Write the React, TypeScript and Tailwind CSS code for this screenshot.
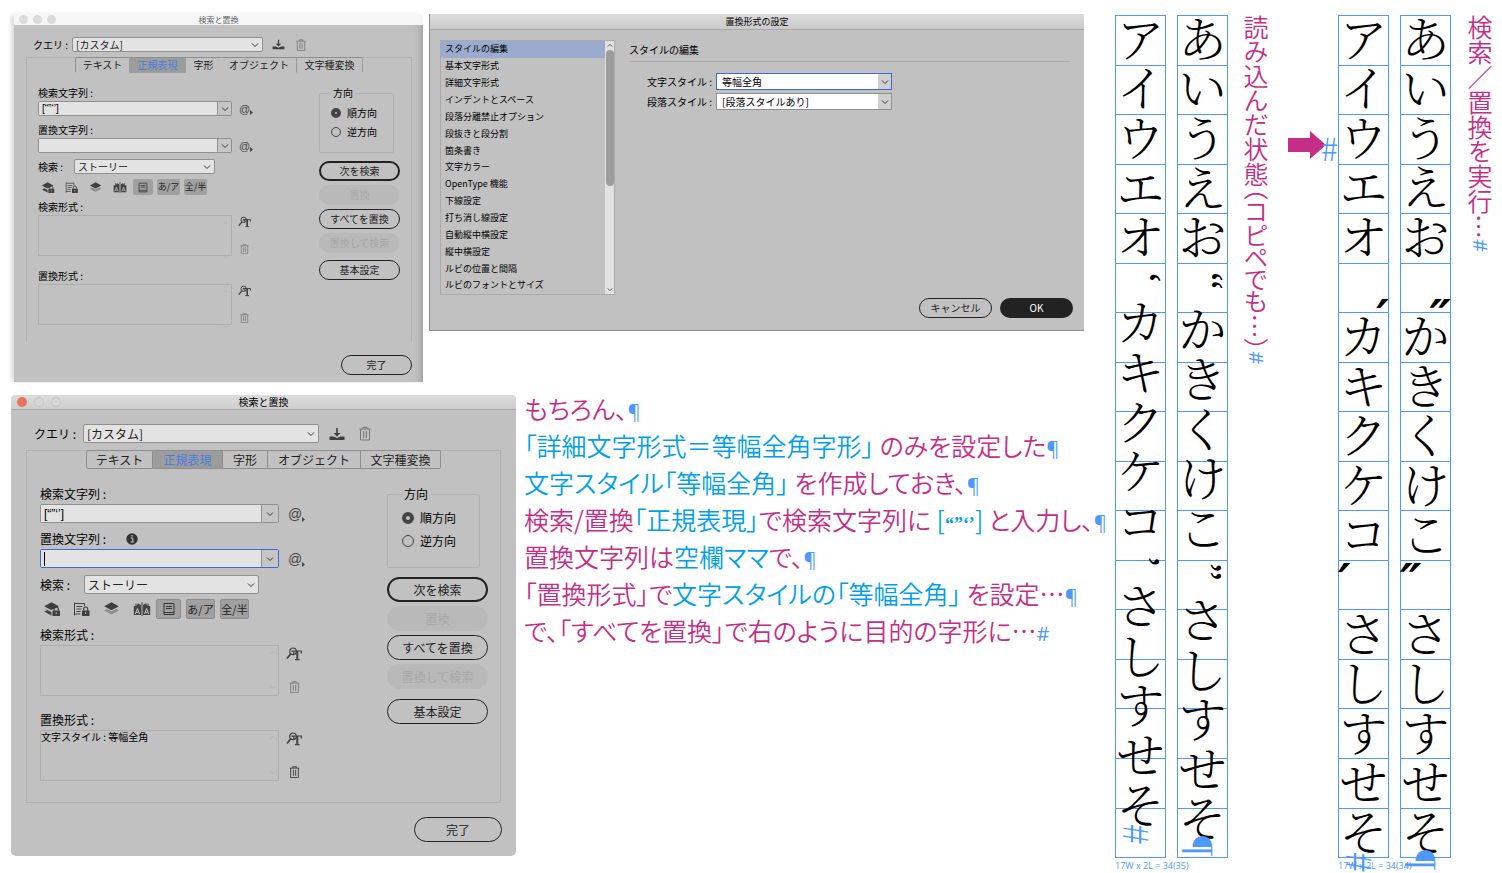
import React from "react";
import { clsx } from "clsx";

type Size = "sm" | "lg";

const SANS = "font-['Noto_Sans_CJK_JP',sans-serif]";
const MINCHO = "font-['Noto_Serif_CJK_JP','Noto_Sans_CJK_JP',serif]";

/* ---------- icons ---------- */

function Chevron({ className }: { className?: string }) {
  return (
    <svg viewBox="0 0 8 8" className={className} fill="none" stroke="#333" strokeWidth="1" aria-hidden="true">
      <path d="M1 2.500 4 5.500 7 2.500" />
    </svg>
  );
}

function SaveIcon({ className }: { className?: string }) {
  return (
    <svg viewBox="0 0 16 14" className={className} fill="#3f3f3f" aria-hidden="true">
      <path d="M7.200 1h1.600v5h2.700L8 9.600 4.500 6h2.700z" />
      <path d="M.5 9.500h4.200L8 11l3.300-1.500h4.200V13H.5z" />
    </svg>
  );
}

function TrashIcon({ className }: { className?: string }) {
  return (
    <svg viewBox="0 0 12 14" className={className} fill="none" stroke="currentColor" strokeWidth="1" aria-hidden="true">
      <path d="M.5 2.500h11M4 2.500V.8h4v1.700M1.500 2.500v11h9v-11M4.700 4.500v7M7.300 4.500v7" />
    </svg>
  );
}

function Lock({ x, y }: { x: number; y: number }) {
  return (
    <g transform={`translate(${x} ${y})`}>
      <path d="M-1 2.500h9.500V9H-1z" fill="#c1c1c1" />
      <path d="M0 3.500h7.500V9H0z" fill="#3f3f3f" />
      <path d="M1.700 3.500V2a2 2 0 0 1 4 0v1.500" fill="none" stroke="#3f3f3f" strokeWidth="1.200" />
      <path d="M3.700 5.200v1.800" stroke="#c1c1c1" />
    </g>
  );
}

function LayersIcon({ lock, className }: { lock?: boolean; className?: string }) {
  return (
    <svg viewBox="0 0 18 14" className={className} aria-hidden="true">
      <path d="M8.500.3 15.800 4.300 8.500 8.300 1.200 4.300z" fill="#3f3f3f" />
      {lock ? (
        <path d="M1.200 6.300 8.500 10.300l2-1v4L8.500 13.500 1.200 9.500l3-1.300z" fill="#3f3f3f" />
      ) : (
        <path d="M1.200 8.500 3.700 7l4.800 2.500L13.300 7l2.500 1.500-7.300 4z" fill="#8a8a8a" />
      )}
      {lock && <Lock x={9.5} y={5} />}
    </svg>
  );
}

function PageLockIcon({ className }: { className?: string }) {
  return (
    <svg viewBox="0 0 18 14" className={className} fill="none" stroke="#444" aria-hidden="true">
      <path d="M1.500 13.500V.5M1.500 1.500h10v3M1.500 12h6M3.500 4.500h6M3.500 7h5M3.500 9.500h4" />
      <g stroke="none">
        <Lock x={9} y={5} />
      </g>
    </svg>
  );
}

function SpreadIcon({ className }: { className?: string }) {
  return (
    <svg viewBox="0 0 18 14" className={className} aria-hidden="true">
      <path d="M.8 4H2.500V1.500h1V4L5 1.200 8 3v10H.8zM17.200 4H15.500V1.500h-1V4L13 1.200 10 3v10h7.200z" fill="#444" />
      <path d="M9 0v14" stroke="#444" strokeWidth="1" />
      <path d="M2.300 12 4.400 6.500 6.500 12M3 10.300h2.800M11.500 12 13.600 6.500 15.700 12M12.200 10.300H15" fill="none" stroke="#c1c1c1" />
    </svg>
  );
}

function FootnoteIcon({ className }: { className?: string }) {
  return (
    <svg viewBox="0 0 12 14" className={className} fill="none" stroke="#333" aria-hidden="true">
      <path d="M1 1.500h10v11H1zM1 10.500h10M3 4.500h6M3 6.500h6" />
    </svg>
  );
}

function FindFormatIcon({ className }: { className?: string }) {
  return (
    <svg viewBox="0 0 16 14" className={className} fill="none" stroke="#3f3f3f" aria-hidden="true">
      <circle cx="7" cy="4.300" r="3.300" strokeWidth="1.200" />
      <path d="M4.800 6.800 1 11.500" strokeWidth="1.700" />
      <path d="M6.300 5V4h9v2.500" strokeWidth="1.200" />
      <path d="M11.300 4v8.500" strokeWidth="2" />
      <path d="M9 12.700h4.600M7.800 4v3" strokeWidth="1.200" />
    </svg>
  );
}

function InfoIcon() {
  return (
    <svg viewBox="0 0 12 12" className="size-3" aria-hidden="true">
      <circle cx="6" cy="6" r="5.700" fill="#333" />
      <path d="M4.700 5h2.100v4M4.500 9h3.300" stroke="#d0d0d0" strokeWidth="1" fill="none" />
      <path d="M5.300 2.300h1.500v1.300H5.300z" fill="#d0d0d0" />
    </svg>
  );
}

function AtIcon({ size }: { size: Size }) {
  return (
    <button aria-label="特殊文字" className="flex items-end text-[#444]">
      <span className={clsx("font-['Liberation_Sans',sans-serif]", size === "lg" ? "text-[14px] leading-4" : "text-[11px] leading-3")}>@</span>
      <svg viewBox="0 0 3 5" className="h-[5px] w-[3px]" aria-hidden="true">
        <path d="M0 0 3 2.500 0 5z" fill="#444" />
      </svg>
    </button>
  );
}

/* ---------- find / replace dialog ---------- */

const styles = {
  lg: {
    text: "text-[12px] leading-4",
    title: "h-[15px] text-[10px] bg-linear-to-b from-[#dcdcdc] to-[#cecece] border-b border-[#aaa] rounded-t-[4px]",
    lights: "left-[6px] gap-[7px]",
    light: "size-[10px]",
    query: "pt-[14px] pl-[23px]",
    queryLabel: "w-[49px]",
    querySelect: "w-[236px]",
    control: "h-[19px]",
    save: "ml-[10px] h-[14px] w-4",
    trashTop: "ml-[14px] h-[15px] w-3",
    panel: "mt-[7px] mx-[15px] h-[353px] border-b",
    tabs: "h-[19px]",
    tabW: ["w-[67px]", "w-[70px]", "w-[45px]", "w-[93px]", "w-[80px]"],
    left: "pt-[17px] pl-[13px]",
    combo: "w-[239px]",
    comboGap: "mt-[2px] gap-[9px]",
    labelGap: "mt-[8px]",
    drop: "w-[17px]",
    scope: "mt-[7px]",
    scopeLabel: "w-[44px]",
    scopeSelect: "w-[175px]",
    icons: "mt-[5px] h-[20px] pl-[3px]",
    iconRow: "w-[113px] gap-[12px]",
    icon: "h-[14px] w-[18px]",
    toggles: "gap-[5px]",
    toggle: ["w-[25px]", "w-[29px]", "w-[29px]"],
    toggleText: "text-[11px]",
    box: "h-[51px] w-[239px] mt-[2px]",
    boxText: "text-[10px] leading-3",
    boxLabel1: "mt-[8px]",
    boxLabel2: "mt-[16px]",
    boxIcons: "ml-[7px] pt-[4px] pb-[3px]",
    find: "h-[14px] w-4",
    trash: "h-[12px] w-[11px]",
    right: "w-[101px] mr-[12px] pt-[17px]",
    dir: "w-[93px] h-[82px] pl-[14px] pt-[8px]",
    radioGap: "gap-[7px]",
    radio: "size-[12px]",
    buttons: "mt-[9px] gap-[4px]",
    button: "h-[25px]",
    last: "mt-[6px]",
    footer: "pt-[14px] pr-[14px] pb-[14px]",
    done: "w-[88px]",
  },
  sm: {
    text: "text-[10px] leading-3",
    title: "h-[11px] text-[8px] bg-[#f6f6f6] text-[#666]",
    lights: "left-[5px] gap-[5px]",
    light: "size-[9px]",
    query: "pt-[12px] pl-[19px]",
    queryLabel: "w-[39px]",
    querySelect: "w-[191px]",
    control: "h-[15px]",
    save: "ml-[9px] h-[11px] w-[13px]",
    trashTop: "ml-[11px] h-[12px] w-[10px]",
    panel: "mt-[5px] mr-[11px] ml-[12px] h-[285px]",
    tabs: "h-[16px]",
    tabW: ["w-[55px]", "w-[56px]", "w-[36px]", "w-[75px]", "w-[66px]"],
    left: "pt-[14px] pl-[11px]",
    combo: "w-[194px]",
    comboGap: "mt-[2px] gap-[7px]",
    labelGap: "mt-[8px]",
    drop: "w-[14px]",
    scope: "mt-[6px]",
    scopeLabel: "w-[36px]",
    scopeSelect: "w-[141px]",
    icons: "mt-[5px] h-[16px] pl-[3px]",
    iconRow: "w-[92px] gap-[10px]",
    icon: "h-[11px] w-[14px]",
    toggles: "gap-[4px]",
    toggle: ["w-[20px]", "w-[23px]", "w-[23px]"],
    toggleText: "text-[9px]",
    box: "h-[41px] w-[194px] mt-[2px]",
    boxText: "text-[8px] leading-3",
    boxLabel1: "mt-[6px]",
    boxLabel2: "mt-[14px]",
    boxIcons: "ml-[6px] pt-[3px] pb-[2px]",
    find: "h-[12px] w-[13px]",
    trash: "h-[10px] w-[9px]",
    right: "w-[81px] mr-[11px] pt-[14px]",
    dir: "w-[75px] h-[66px] pl-[11px] pt-[8px]",
    radioGap: "gap-[7px]",
    radio: "size-[10px]",
    buttons: "mt-[8px] gap-[4px]",
    button: "h-[20px]",
    last: "mt-[3px]",
    footer: "pt-[13px] pr-[11px] pb-[7px]",
    done: "w-[71px]",
  },
};

function Pill({ children, size, kind = "line", className }: { children: React.ReactNode; size: Size; kind?: "line" | "default" | "off"; className?: string }) {
  return (
    <button
      disabled={kind === "off"}
      className={clsx(
        "flex shrink-0 items-center justify-center rounded-full",
        styles[size].button,
        kind === "line" && "border border-[#222] text-[#222]",
        kind === "default" && "border-2 border-[#222] text-[#222]",
        kind === "off" && "bg-[#b9b9b9] text-[#a8a8a8]",
        className,
      )}
    >
      {children}
    </button>
  );
}

function Combo({ id, size, value, focused }: { id: string; size: Size; value: string; focused?: boolean }) {
  const s = styles[size];
  return (
    <div className={clsx("flex items-center", s.comboGap)}>
      <div className={clsx("relative flex shrink-0 rounded-[2px] border", focused ? "border-[#4068d8]" : "border-[#909090]", s.combo, s.control)}>
        <input
          id={id}
          defaultValue={value}
          className="min-w-0 flex-1 bg-[#e3e3e3] px-[3px] font-['Liberation_Sans',sans-serif] outline-none"
        />
        {focused && <span className="absolute top-[2px] left-[3px] h-[14px] w-px bg-black" />}
        <button aria-label="履歴" className={clsx("flex items-center justify-center border-l border-[#909090] bg-[#c6c6c6]", s.drop)}>
          <Chevron className="size-2" />
        </button>
      </div>
      <AtIcon size={size} />
    </div>
  );
}

function Select({ id, size, value, className }: { id: string; size: Size; value: string; className: string }) {
  return (
    <div className={clsx("relative", className)}>
      <select
        id={id}
        className={clsx("block w-full appearance-none rounded-[2px] border border-[#909090] bg-[#e3e3e3] pl-[3px] text-[#222]", styles[size].control)}
      >
        <option>{value}</option>
      </select>
      <Chevron className="pointer-events-none absolute top-1/2 right-[4px] size-2 -translate-y-1/2" />
    </div>
  );
}

function FormatBox({ size, label, value, gap, active }: { size: Size; label: string; value?: string; gap: string; active?: boolean }) {
  const s = styles[size];
  return (
    <div>
      <div className={gap}>{label}</div>
      <div className="flex">
        <div className={clsx("relative border border-[#aeaeae]", s.box, s.boxText)}>
          {value}
          <svg viewBox="0 0 6 40" className="absolute inset-y-1 right-[2px] w-[6px]" fill="none" stroke="#b2b2b2" aria-hidden="true">
            <path d="M.5 4 3 1.500 5.500 4M.5 36 3 38.500 5.500 36" />
          </svg>
        </div>
        <div className={clsx("flex flex-col items-center justify-between", s.boxIcons)}>
          <button aria-label="属性を指定">
            <FindFormatIcon className={s.find} />
          </button>
          <button aria-label="属性を消去" className={active ? "text-[#333]" : "text-[#777]"}>
            <TrashIcon className={s.trash} />
          </button>
        </div>
      </div>
    </div>
  );
}

function FindDialog({ size }: { size: Size }) {
  const s = styles[size];
  const lg = size === "lg";
  const tabs = ["テキスト", "正規表現", "字形", "オブジェクト", "文字種変換"];
  return (
    <section
      className={clsx(
        "shrink-0 bg-[#c1c1c1] text-black",
        s.text,
        lg ? "w-[505px] rounded-[5px]" : "w-[409px] shadow-[-4px_0_4px_-1px_#ddd,inset_-7px_0_6px_-5px_#9b9b9b]",
      )}
    >
      <header className={clsx("relative flex items-center justify-center", s.title)}>
        <span className={clsx("absolute flex", s.lights)}>
          <i className={clsx("rounded-full", s.light, lg ? "bg-[#e4745c]" : "bg-[#dcdcdc]")} />
          <i className={clsx("rounded-full border", s.light, lg ? "border-[#c4c4c4] bg-[#d6d6d6]" : "border-[#d8d8d8] bg-[#dcdcdc]")} />
          <i className={clsx("rounded-full border", s.light, lg ? "border-[#c4c4c4] bg-[#d6d6d6]" : "border-[#d8d8d8] bg-[#dcdcdc]")} />
        </span>
        <h2>検索と置換</h2>
      </header>

      <div className={clsx("flex items-center", s.query)}>
        <label htmlFor={`query-${size}`} className={s.queryLabel}>クエリ :</label>
        <Select id={`query-${size}`} size={size} value="[カスタム]" className={s.querySelect} />
        <button aria-label="クエリを保存"><SaveIcon className={s.save} /></button>
        <button aria-label="クエリを削除" className="text-[#777]"><TrashIcon className={s.trashTop} /></button>
      </div>

      <div className={clsx("border-x border-t border-[#b0b0b0]", s.panel)}>
        <div role="tablist" className={clsx("-mt-px flex justify-center", s.tabs)}>
          {tabs.map((t, i) => (
            <button
              key={t}
              role="tab"
              aria-selected={i === 1}
              className={clsx(
                "flex items-center justify-center border-y border-r whitespace-nowrap first:rounded-l-[2px] first:border-l last:rounded-r-[2px]",
                lg ? "border-[#8e8e8e]" : "border-t-[#8e8e8e] border-b-transparent border-l-[#8e8e8e]",
                !lg && (i === 2 || i === 1 ? "border-r-transparent" : "border-r-[#9a9a9a]"),
                s.tabW[i],
                i === 1 ? "bg-[#9c9c9c] text-[#4a7de0]" : "bg-[#c1c1c1] text-[#222]",
              )}
            >
              {t}
            </button>
          ))}
        </div>

        <div className="flex justify-between">
          <div className={s.left}>
            <label htmlFor={`find-${size}`} className="block">検索文字列 :</label>
            <Combo id={`find-${size}`} size={size} value="[“”‘’]" />
            <div className={clsx("flex items-center gap-[20px]", s.labelGap)}>
              <label htmlFor={`change-${size}`}>置換文字列 :</label>
              {lg && <InfoIcon />}
            </div>
            <Combo id={`change-${size}`} size={size} value="" focused={lg} />
            <div className={clsx("flex items-center", s.scope)}>
              <label htmlFor={`scope-${size}`} className={s.scopeLabel}>検索 :</label>
              <Select id={`scope-${size}`} size={size} value="ストーリー" className={s.scopeSelect} />
            </div>
            <div className={clsx("flex items-center", s.icons)}>
              <div className={clsx("flex shrink-0 items-center", s.iconRow)}>
                <button aria-label="ロックされたレイヤー"><LayersIcon lock className={s.icon} /></button>
                <button aria-label="ロックされたストーリー"><PageLockIcon className={s.icon} /></button>
                <button aria-label="非表示レイヤー"><LayersIcon className={s.icon} /></button>
                <button aria-label="親ページ"><SpreadIcon className={s.icon} /></button>
              </div>
              <div className={clsx("flex h-full", s.toggles, s.toggleText)}>
                {[<FootnoteIcon key="f" className={lg ? "h-[14px] w-3" : "h-[11px] w-[10px]"} />, "あ/ア", "全/半"].map((c, i) => (
                  <button
                    key={i}
                    aria-label={i === 0 ? "脚注" : undefined}
                    className={clsx("flex items-center justify-center rounded-[2px] bg-[#a0a0a0] whitespace-nowrap text-[#222]", lg && "border border-[#8c8c8c]", s.toggle[i])}
                  >
                    {c}
                  </button>
                ))}
              </div>
            </div>
            <FormatBox size={size} label="検索形式 :" gap={s.boxLabel1} />
            <FormatBox size={size} label="置換形式 :" gap={s.boxLabel2} value={lg ? "文字スタイル : 等幅全角" : undefined} active={lg} />
          </div>

          <div className={clsx("shrink-0", s.right)}>
            <fieldset className={clsx("rounded-[2px] border border-[#b0b0b0]", s.dir)}>
              <legend className="px-[2px]">方向</legend>
              <div className={clsx("flex flex-col", s.radioGap)}>
                {["順方向", "逆方向"].map((d, i) => (
                  <label key={d} className="flex items-center gap-[6px]">
                    <input
                      type="radio"
                      name={`direction-${size}`}
                      defaultChecked={i === 0}
                      className={clsx("appearance-none rounded-full border border-[#444] checked:border-4", s.radio)}
                    />
                    {d}
                  </label>
                ))}
              </div>
            </fieldset>
            <div className={clsx("flex flex-col", s.buttons)}>
              <Pill size={size} kind="default">次を検索</Pill>
              <Pill size={size} kind="off">置換</Pill>
              <Pill size={size}>すべてを置換</Pill>
              <Pill size={size} kind="off">置換して検索</Pill>
              <Pill size={size} className={s.last}>基本設定</Pill>
            </div>
          </div>
        </div>
      </div>

      <footer className={clsx("flex justify-end", s.footer)}>
        <Pill size={size} className={s.done}>完了</Pill>
      </footer>
    </section>
  );
}

/* ---------- format settings dialog ---------- */

const categories = [
  "スタイルの編集", "基本文字形式", "詳細文字形式", "インデントとスペース", "段落分離禁止オプション",
  "段抜きと段分割", "箇条書き", "文字カラー", "OpenType 機能", "下線設定", "打ち消し線設定",
  "自動縦中横設定", "縦中横設定", "ルビの位置と間隔", "ルビのフォントとサイズ",
];

function StyleField({ id, label, value, focused }: { id: string; label: string; value: string; focused?: boolean }) {
  return (
    <div className="flex items-center">
      <label htmlFor={id} className="w-[69px]">{label}</label>
      <div className="relative w-[176px]">
        <select id={id} className={clsx("block h-[17px] w-full appearance-none border bg-white pl-[5px]", focused ? "border-[#4068d8]" : "border-[#909090]")}>
          <option>{value}</option>
        </select>
        <span className="pointer-events-none absolute inset-y-px right-px flex w-[13px] items-center justify-center bg-[#d0d0d0]">
          <Chevron className="size-2" />
        </span>
      </div>
    </div>
  );
}

function FormatDialog() {
  return (
    <section className="flex w-[655px] shrink-0 flex-col self-start border-b border-l border-[#8e8e8e] bg-[#c1c1c1] text-[10px] leading-3 text-black">
      <header className="flex h-[16px] items-center justify-center border-b border-[#a9a9a9] bg-linear-to-b from-[#dcdcdc] to-[#c9c9c9]">
        <h2 className="text-[9px]">置換形式の設定</h2>
      </header>
      <div className="flex gap-[14px] pt-[10px] pr-[14px] pl-[10px]">
        <div className="flex h-[255px] w-[175px] border border-[#aaa]">
          <ul className="flex flex-1 flex-col text-[9px]">
            {categories.map((c, i) => (
              <li key={c} className={clsx("flex min-h-0 flex-1 items-center pl-[4px]", i === 0 && "bg-[#9aabce]")}>{c}</li>
            ))}
          </ul>
          <div className="flex w-[9px] flex-col items-center bg-[#e2e2e2]">
            <Chevron className="h-[9px] w-[6px] rotate-180" />
            <div className="h-[136px] w-[8px] rounded-full bg-[#9c9c9c]" />
            <Chevron className="mt-auto h-[9px] w-[6px]" />
          </div>
        </div>
        <div className="flex-1">
          <h3 className="border-b border-[#acacac] pt-[4px] pb-[5px]">スタイルの編集</h3>
          <div className="flex flex-col gap-[3px] pt-[11px] pl-[18px]">
            <StyleField id="char-style" label="文字スタイル :" value="等幅全角" focused />
            <StyleField id="para-style" label="段落スタイル :" value="[段落スタイルあり]" />
          </div>
        </div>
      </div>
      <footer className="flex justify-end gap-[8px] pt-[3px] pr-[11px] pb-[12px]">
        <button className="h-[20px] w-[73px] rounded-full border border-[#222] text-[#222]">キャンセル</button>
        <button className="h-[20px] w-[73px] rounded-full bg-[#222] text-white">OK</button>
      </footer>
    </section>
  );
}

/* ---------- notes ---------- */

function C({ children }: { children: React.ReactNode }) {
  return <span className="text-[#00a0e9]">{children}</span>;
}

function Mark({ children = "¶" }: { children?: string }) {
  return <span className="font-['Open_Sans',sans-serif] text-[20px] leading-none font-normal text-[#4d99ff]">{children}</span>;
}

function Notes() {
  return (
    <div className="-mt-[5px] text-[25px] leading-[37px] font-[350] whitespace-nowrap text-[#c42e87] [font-feature-settings:'palt']">
      <p>もちろん、<Mark /></p>
      <p><C>「詳細文字形式＝等幅全角字形」</C> のみを設定した<Mark /></p>
      <p><C>文字スタイル「等幅全角」</C> を作成しておき、<Mark /></p>
      <p>
        検索/置換<C>「正規表現」</C>で検索文字列に{" "}
        <C>[<span className="font-['Liberation_Serif',serif] text-[18px] leading-none font-bold">“”‘’</span>]</C>
        {"\u2009"}と入力し、<Mark />
      </p>
      <p>置換文字列は<C>空欄ママ</C>で、<Mark /></p>
      <p>「置換形式」で<C>文字スタイルの「等幅全角」</C> を設定…<Mark /></p>
      <p>で、「すべてを置換」で右のように目的の字形に…<Mark>#</Mark></p>
    </div>
  );
}

/* ---------- vertical frame grids ---------- */

function Frame({ children }: { children: React.ReactNode }) {
  return (
    <div className="relative h-[843px] w-[51px]">
      <div className="flex h-full flex-col border-x border-t border-[#4d99ff]">
        {Array.from({ length: 17 }, (_, i) => (
          <div key={i} className="flex-1 border-b border-[#4d99ff]" />
        ))}
      </div>
      <div className={clsx("absolute inset-x-0 -top-[3px] bottom-[3px] flex flex-col text-[48px] leading-none text-black", MINCHO)}>{children}</div>
    </div>
  );
}

function Kana({ text }: { text: string }) {
  return (
    <>
      {[...text].map((c) => (
        <div key={c} className="flex min-h-0 flex-[100] items-center justify-center font-light">{c}</div>
      ))}
    </>
  );
}

function Quote({ children, grow }: { children: string; grow: string }) {
  return (
    <div className={clsx("flex min-h-0 items-center justify-center pl-[10px] font-['Liberation_Serif',serif] text-[40px] [writing-mode:vertical-rl]", grow)}>
      {children}
    </div>
  );
}

function Prime({ children, low }: { children: string; low?: boolean }) {
  return (
    <div
      className={clsx(
        "flex min-h-0 flex-[100] font-['DejaVu_Sans',sans-serif] text-[48px] leading-none font-bold italic",
        low ? "items-end justify-end" : "items-start",
      )}
    >
      <span className={clsx(low && "-mb-[32px]")}>{children}</span>
    </div>
  );
}

function Tail({ children, grow }: { children: string; grow: string }) {
  return (
    <div className={clsx("flex min-h-0 flex-col pr-[10px] text-[#4d99ff]", grow)}>
      <span className={clsx("mx-auto [writing-mode:vertical-rl]", children === "#" ? "-mt-[3px] text-[36px] font-light" : "-mt-[12px] text-[34px]")}>{children}</span>
    </div>
  );
}

function Caption({ children }: { children: string }) {
  return <p className="mt-[2px] font-['Open_Sans',sans-serif] text-[9px] leading-3 whitespace-nowrap text-[#4d99ff]">{children}</p>;
}

function VerticalNote({ children }: { children: React.ReactNode }) {
  return (
    <p className="text-[25px] leading-[26px] font-[350] whitespace-nowrap text-[#c42e87] [font-feature-settings:'vpal'] [writing-mode:vertical-rl]">
      {children}
    </p>
  );
}

export default function App() {
  return (
    <main className={clsx("flex min-h-screen items-start overflow-hidden bg-white pr-[9px]", SANS)}>
      <div className="min-w-0 flex-1 pt-[14px] pl-[11px]">
        <div className="flex gap-[6px] pl-[3px]">
          <FindDialog size="sm" />
          <FormatDialog />
        </div>
        <div className="mt-[13px] flex items-start gap-[8px]">
          <FindDialog size="lg" />
          <Notes />
        </div>
      </div>

      <div className="flex shrink-0 items-start pt-[15px]">
        <div>
          <div className="flex gap-[11px]">
            <Frame>
              <Kana text="アイウエオ" />
              <Quote grow="flex-[72]">‘</Quote>
              <Kana text="カキクケコ" />
              <Quote grow="flex-[72]">’</Quote>
              <Kana text="さしすせそ" />
              <Tail grow="flex-[56]">#</Tail>
            </Frame>
            <Frame>
              <Kana text="あいうえお" />
              <Quote grow="flex-[86]">“</Quote>
              <Kana text="かきくけこ" />
              <Quote grow="flex-[86]">”</Quote>
              <Kana text="さしすせそ" />
              <Tail grow="flex-[28]">¶</Tail>
            </Frame>
          </div>
          <Caption>17W x 2L = 34(35)</Caption>
        </div>

        <div className="ml-[15px]">
          <VerticalNote>読み込んだ状態（コピペでも…）<Mark>#</Mark></VerticalNote>
        </div>

        <div className="relative mt-[116px] ml-[19px] w-[50px]">
          <svg viewBox="0 0 38 28" className="h-[28px] w-[38px]" aria-hidden="true">
            <path d="M0 7h22V0l16 14-16 14v-7H0z" fill="#c42e87" />
          </svg>
          <span className="absolute top-0 right-0 text-[32px] leading-8 font-light text-[#4d99ff]">#</span>
        </div>

        <div>
          <div className="flex gap-[11px]">
            <Frame>
              <Kana text="アイウエオ" />
              <Prime low>′</Prime>
              <Kana text="カキクケコ" />
              <Prime>′</Prime>
              <Kana text="さしすせそ" />
              <Tail grow="flex-[1]">#</Tail>
            </Frame>
            <Frame>
              <Kana text="あいうえお" />
              <Prime low>″</Prime>
              <Kana text="かきくけこ" />
              <Prime>″</Prime>
              <Kana text="さしすせそ" />
              <Tail grow="flex-[1]">¶</Tail>
            </Frame>
          </div>
          <Caption>17W x 2L = 34(34)</Caption>
        </div>

        <div className="ml-[16px]">
          <VerticalNote>検索／置換を実行…<Mark>#</Mark></VerticalNote>
        </div>
      </div>
    </main>
  );
}
